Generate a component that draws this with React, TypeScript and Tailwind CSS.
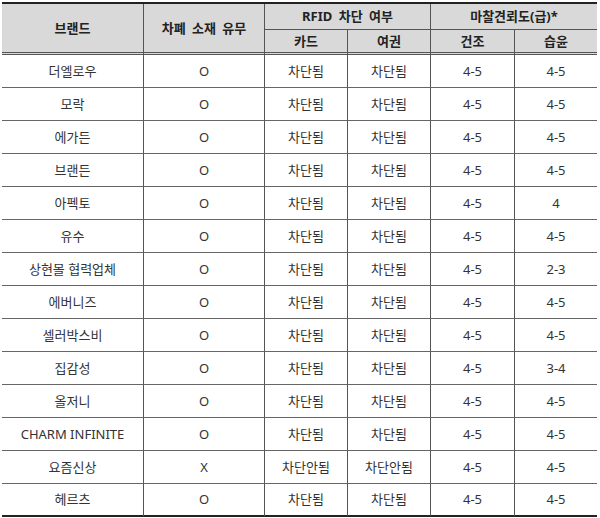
import React from "react";

const rows: [string, string, string, string, string, string][] = [
  ["더엘로우", "O", "차단됨", "차단됨", "4-5", "4-5"],
  ["모락", "O", "차단됨", "차단됨", "4-5", "4-5"],
  ["에가든", "O", "차단됨", "차단됨", "4-5", "4-5"],
  ["브랜든", "O", "차단됨", "차단됨", "4-5", "4-5"],
  ["아펙토", "O", "차단됨", "차단됨", "4-5", "4"],
  ["유수", "O", "차단됨", "차단됨", "4-5", "4-5"],
  ["상현몰 협력업체", "O", "차단됨", "차단됨", "4-5", "2-3"],
  ["에버니즈", "O", "차단됨", "차단됨", "4-5", "4-5"],
  ["셀러박스비", "O", "차단됨", "차단됨", "4-5", "4-5"],
  ["집감성", "O", "차단됨", "차단됨", "4-5", "3-4"],
  ["올저니", "O", "차단됨", "차단됨", "4-5", "4-5"],
  ["CHARM INFINITE", "O", "차단됨", "차단됨", "4-5", "4-5"],
  ["요즘신상", "X", "차단안됨", "차단안됨", "4-5", "4-5"],
  ["헤르츠", "O", "차단됨", "차단됨", "4-5", "4-5"],
];

export default function App() {
  return (
    <div
      className="h-[518px] w-[600px] bg-white pt-[2px] pl-[2px] text-[13px] text-[#333]"
      style={{ fontFamily: '"Noto Sans", "Noto Sans CJK KR", sans-serif' }}
    >
      <table className="w-[595px] table-fixed border-separate border-spacing-0 border-t-2 border-[#222]">
        <colgroup>
          <col className="w-[141px]" />
          <col className="w-[121px]" />
          <col className="w-[83px]" />
          <col className="w-[83px]" />
          <col className="w-[84px]" />
          <col className="w-[83px]" />
        </colgroup>
        <thead className="font-bold text-[#222]">
          <tr className="bg-[#d9d9d9]">
            <th rowSpan={2} className="border-b-[3px] border-double border-[#555] p-0 leading-none">
              브랜드
            </th>
            <th rowSpan={2} className="border-b-[3px] border-l border-double border-[#555] p-0 leading-none [word-spacing:3px]">
              차폐 소재 유무
            </th>
            <th colSpan={2} className="h-[26px] border-b border-l border-[#555] p-0 leading-none [word-spacing:3px]">
              RFID 차단 여부
            </th>
            <th colSpan={2} className="h-[26px] border-b border-l border-[#555] p-0 leading-none">
              마찰견뢰도(급)*
            </th>
          </tr>
          <tr className="bg-[#d9d9d9]">
            <th className="h-[25px] border-b-[3px] border-l border-double border-[#555] p-0 leading-none">카드</th>
            <th className="h-[25px] border-b-[3px] border-l border-double border-[#555] p-0 leading-none">여권</th>
            <th className="h-[25px] border-b-[3px] border-l border-double border-[#555] p-0 leading-none">건조</th>
            <th className="h-[25px] border-b-[3px] border-l border-double border-[#555] p-0 leading-none">습윤</th>
          </tr>
        </thead>
        <tbody>
          {rows.map((r, i) => {
            const last = i === rows.length - 1;
            const b = last ? "border-b-2 border-[#222]" : "border-b border-[#666]";
            return (
              <tr key={i} className="h-[33px]">
                {r.map((c, j) => (
                  <td
                    key={j}
                    className={`${b} p-0 text-center leading-none ${j > 0 ? "border-l border-l-[#555]" : ""}`}
                  >
                    {c}
                  </td>
                ))}
              </tr>
            );
          })}
        </tbody>
      </table>
    </div>
  );
}
